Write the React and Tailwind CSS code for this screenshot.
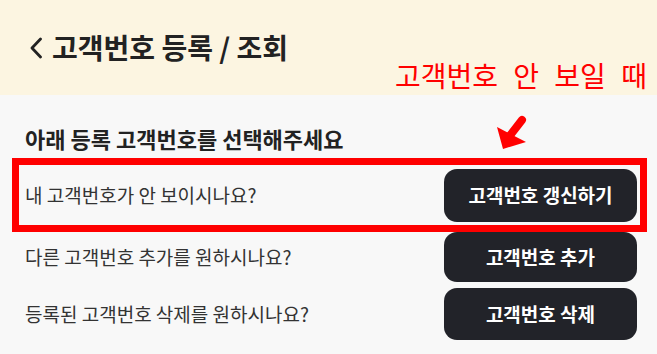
const rows = [
  { q: "내 고객번호가 안 보이시나요?", label: "고객번호 갱신하기", cls: "h-[53px]" },
  { q: "다른 고객번호 추가를 원하시나요?", label: "고객번호 추가", cls: "mt-[10px] h-[50px]" },
  { q: "등록된 고객번호 삭제를 원하시나요?", label: "고객번호 삭제", cls: "mt-[6px] h-[52px]" },
];

const App = () => {
  return (
    <div className="relative w-[657px] h-[354px] overflow-hidden bg-[#f8f8f8] font-['Noto_Sans_CJK_KR',sans-serif] text-[#222]">
      <header className="h-[95px] bg-[#fcf5e1] flex items-center pl-[30px] gap-[10px]">
        <svg width="12" height="22" viewBox="0 0 12 22" fill="none">
          <polyline points="10.5,2 2,11 10.5,20" stroke="#222" strokeWidth="2.8" strokeLinecap="round" strokeLinejoin="round" />
        </svg>
        <h1 className="text-[28px] font-bold leading-none -mt-[2px]">고객번호 등록 / 조회</h1>
      </header>

      <main className="pt-[28px] pl-[25px] pr-[20px]">
        <h2 className="text-[22px] font-bold leading-[30px]">아래 등록 고객번호를 선택해주세요</h2>
        <div className="mt-[16px] flex flex-col">
          {rows.map((r) => (
            <div key={r.label} className={`flex items-center justify-between ${r.cls}`}>
              <p className="text-[19px] text-[#333]">{r.q}</p>
              <button className="w-[193px] h-full rounded-[13px] bg-[#222329] text-white text-[19px] font-bold">
                {r.label}
              </button>
            </div>
          ))}
        </div>
      </main>

      {/* annotation overlay */}
      <div className="absolute left-[395px] top-[61px] text-[28px] leading-none text-[#ff0000] [word-spacing:9px]">
        고객번호 안 보일 때
      </div>
      <svg className="absolute left-[490px] top-[110px]" width="40" height="45" viewBox="0 0 40 45">
        <line x1="32" y1="10" x2="18" y2="28" stroke="#ff0000" strokeWidth="8" strokeLinecap="round" />
        <polygon points="7,17 13,39 36,32" fill="#ff0000" />
      </svg>
      <div className="absolute left-[12px] top-[158px] w-[635px] h-[74px] border-[7px] border-[#ff0000] pointer-events-none" />
    </div>
  );
};

export default App;
